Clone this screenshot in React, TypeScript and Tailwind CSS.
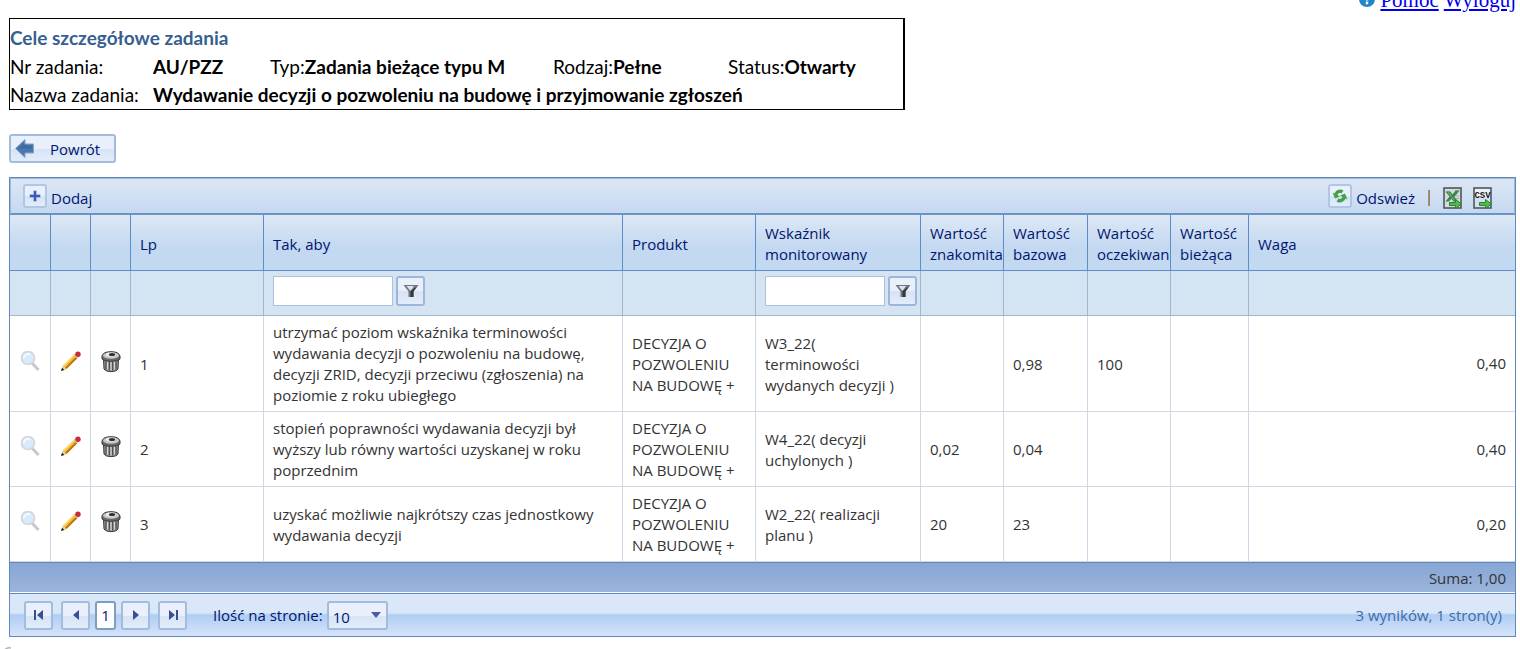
import { useState } from "react";
import type { ReactNode } from "react";

type Goal = {
  lp: number;
  goal: string;
  product: string;
  indicator: string;
  known: string;
  base: string;
  expected: string;
  current: string;
  weight: string;
};

const goals: Goal[] = [
  {
    lp: 1,
    goal: "utrzymać poziom wskaźnika terminowości\nwydawania decyzji o pozwoleniu na budowę,\ndecyzji ZRID, decyzji przeciwu (zgłoszenia) na\npoziomie z roku ubiegłego",
    product: "DECYZJA O\nPOZWOLENIU\nNA BUDOWĘ +",
    indicator: "W3_22(\nterminowości\nwydanych decyzji )",
    known: "",
    base: "0,98",
    expected: "100",
    current: "",
    weight: "0,40",
  },
  {
    lp: 2,
    goal: "stopień poprawności wydawania decyzji był\nwyższy lub równy wartości uzyskanej w roku\npoprzednim",
    product: "DECYZJA O\nPOZWOLENIU\nNA BUDOWĘ +",
    indicator: "W4_22( decyzji\nuchylonych )",
    known: "0,02",
    base: "0,04",
    expected: "",
    current: "",
    weight: "0,40",
  },
  {
    lp: 3,
    goal: "uzyskać możliwie najkrótszy czas jednostkowy\nwydawania decyzji",
    product: "DECYZJA O\nPOZWOLENIU\nNA BUDOWĘ +",
    indicator: "W2_22( realizacji\nplanu )",
    known: "20",
    base: "23",
    expected: "",
    current: "",
    weight: "0,20",
  },
];

const headers = [
  "",
  "",
  "",
  "Lp",
  "Tak, aby",
  "Produkt",
  "Wskaźnik\nmonitorowany",
  "Wartość\nznakomita",
  "Wartość\nbazowa",
  "Wartość\noczekiwana",
  "Wartość\nbieżąca",
  "Waga",
];

const glossy = "bg-linear-to-b from-[#e9f0fb] from-50% via-[#d5e3f5] via-50% to-[#e3edfa]";

const ArrowLeftIcon = () => (
  <svg width="20" height="20" viewBox="0 0 20 20" aria-hidden="true">
    <path d="M0.500 9.500 10 0.500V5H18.500V14H10V18.500Z" fill="#4a78ad" stroke="#86a5c9" />
    <path d="M3 9.500 9 4V6.500H17V9.500Z" fill="#3d6ba2" />
  </svg>
);

const PlusIcon = () => (
  <svg width="12" height="12" viewBox="0 0 12 12" aria-hidden="true">
    <path d="M6 0.500V11.500M0.500 6H11.500" stroke="#93addf" strokeWidth="3.500" />
    <path d="M6 1V11M1 6H11" stroke="#3a5bb5" strokeWidth="2" />
  </svg>
);

const RefreshIcon = () => (
  <svg width="16" height="16" viewBox="0 0 16 16" aria-hidden="true" fill="#46a04b">
    <path d="M0.500 4.500 2.500 5.500C4 2 8 0.500 11.500 2.500L9.500 5.500C8 4.500 6.500 5 5.500 7L8 8.500 3 10.500Z" />
    <path d="M15.500 11.500 13.500 10.500C12 14 8 15.500 4.500 13.500L6.500 10.500C8 11.500 9.500 11 10.500 9L8 7.500 13 5.500Z" />
  </svg>
);

const ExportArrow = () => (
  <path
    d="M6.500 15.500H12.500V12.500L18.500 17 12.500 21.500V18.500H6.500Z"
    fill="#55b84c"
    stroke="#24852b"
  />
);

const ExcelIcon = () => (
  <svg width="19" height="22" viewBox="0 0 19 22" aria-hidden="true">
    <rect x="1" y="1" width="17" height="20" fill="#d3dcd8" stroke="#50585e" strokeWidth="1.600" />
    <path d="M12 3.500H16.500M13 9H16.500M12 11.500H16.500" stroke="#a4b5a8" />
    <path d="M2.500 4.500H7.500L9.500 7.500 12.500 3.500H16.500L11.500 10 15 14.500H10.500L8.500 11.800 6 14.500H2.500L6.500 9.500Z" fill="#468a54" />
    <path d="M3.500 5H6.500L13 14H11ZM3.500 14 14.500 4.500" fill="#6fa97a" stroke="#2f6f3d" strokeWidth="0.600" />
    <ExportArrow />
  </svg>
);

const CsvIcon = () => (
  <svg width="19" height="22" viewBox="0 0 19 22" aria-hidden="true">
    <rect x="1" y="1" width="17" height="20" fill="#d3e0f2" stroke="#50585e" strokeWidth="1.600" />
    <rect x="2" y="2" width="15" height="9" fill="#eef1f4" />
    <text
      x="9.500"
      y="11"
      textAnchor="middle"
      fontFamily="'Liberation Mono', monospace"
      fontWeight="700"
      fontSize="9"
      fill="#16181a"
    >
      CSV
    </text>
    <ExportArrow />
  </svg>
);

const SearchIcon = () => (
  <svg width="20" height="22" viewBox="0 0 20 22" aria-hidden="true">
    <path d="M12 12 18.500 19" stroke="#c8c8c8" strokeWidth="3" />
    <circle cx="8" cy="7" r="6.500" fill="#d8eafc" stroke="#d3d6da" strokeWidth="1.600" />
    <path d="M4 7A4 4 0 0 1 10 3.500" fill="none" stroke="#f5faff" strokeWidth="2" />
  </svg>
);

const PencilIcon = () => (
  <svg width="20" height="22" viewBox="0 0 20 22" aria-hidden="true">
    <path d="M0.500 19.500 2 14.500 13 3.500 16.500 7 5.500 18Z" fill="#f0b429" />
    <path d="M5.500 18 16.500 7 15.200 5.700 4 17Z" fill="#b8720f" />
    <path d="M2 14.500 13 3.500 14 4.500 3 15.700Z" fill="#fbdc7c" />
    <path d="M0.500 19.500 2 14.500 5.500 18Z" fill="#e8cfa2" />
    <path d="M0 20 1 16.800 3.400 19Z" fill="#1c1c1c" />
    <path d="M12.500 4 14.500 2 18 5.500 16 7.500Z" fill="#c9cdd4" />
    <circle cx="17" cy="3.200" r="2.700" fill="#cf2b33" />
  </svg>
);

const TrashIcon = () => (
  <svg width="20" height="22" viewBox="0 0 20 22" aria-hidden="true">
    <path d="M2.500 8 3 18C5 21.500 15 21.500 17 18L17.500 8Z" fill="#8f928f" stroke="#3a3c3a" />
    <path d="M5 10V18.500M8.500 10.500V19.500M11.500 10.500V19.500M15 10V18.500" stroke="#4d504d" strokeWidth="1.200" />
    <path d="M6.500 10.500V18.500M10 10.500V19.500M13.500 10.500V18.500" stroke="#d4d7d4" strokeWidth="1.200" />
    <path d="M1 5C2 2 5 0.700 10 0.700S18 2 19 5V8C16 11 4 11 1 8Z" fill="#686b68" stroke="#3a3c3a" />
    <ellipse cx="10" cy="4.500" rx="8" ry="3.200" fill="#c6c9c6" />
    <ellipse cx="10" cy="3.500" rx="5" ry="2" fill="#eff0ef" />
    <ellipse cx="11" cy="3.500" rx="3.200" ry="1.500" fill="#2f312f" />
  </svg>
);

const FunnelIcon = () => (
  <svg width="16" height="14" viewBox="0 0 16 14" aria-hidden="true">
    <path d="M0.500 1H15.500L10.500 7.500V13H5.500V7.500Z" fill="#70777f" />
    <path d="M3.500 2H11L8 6.500 7 6.500Z" fill="#dfe3e8" />
    <path d="M7.500 7V13H10.500V7.500L14 2.500Z" fill="#34383e" />
  </svg>
);

const HelpIcon = () => (
  <svg width="16" height="16" viewBox="0 0 16 16" className="shrink-0" aria-hidden="true">
    <circle cx="8" cy="8" r="8" fill="#1f86c8" />
    <path d="M8 2V9.500" stroke="#fff" strokeWidth="2.500" />
    <circle cx="8" cy="12" r="1.400" fill="#fff" />
  </svg>
);

const PagerButton = ({ label, children }: { label: string; children: ReactNode }) => (
  <button
    aria-label={label}
    className={`flex h-[29px] w-[29px] items-center justify-center rounded-[3px] border-2 border-[#a3bbdc] ${glossy}`}
  >
    <svg width="12" height="12" viewBox="0 0 12 12" fill="#39508f" aria-hidden="true">
      {children}
    </svg>
  </button>
);

const ToolButton = ({ text, children }: { text: string; children: ReactNode }) => (
  <button className="flex items-center gap-1 text-[#00156e]">
    <span className={`flex h-6 w-6 items-center justify-center rounded-[3px] border-2 border-[#b0c6e4] ${glossy}`}>
      {children}
    </span>
    <span className="pt-1">{text}</span>
  </button>
);

const Filter = ({ label }: { label: string }) => (
  <div className="flex gap-[3px]">
    <input
      type="text"
      aria-label={label}
      className="h-[30px] w-[120px] border border-[#abc1de] bg-white px-1"
    />
    <button
      aria-label={`Filtruj: ${label}`}
      className={`flex h-[30px] w-[29px] shrink-0 items-center justify-center rounded-[3px] border-2 border-[#9db7db] ${glossy}`}
    >
      <FunnelIcon />
    </button>
  </div>
);

const TaskInfo = () => (
  <section className="max-w-[896px] border border-r-2 border-black pt-[5px] font-['Lato','Open_Sans',sans-serif] text-[19px] whitespace-nowrap text-black">
    <h1 className="text-[19px] leading-[28px] font-bold text-[#365f91]">Cele szczegółowe zadania</h1>
    <div className="grid grid-cols-[143px_117px_283px_175px_1fr]">
      <span className="leading-[29px]">Nr zadania:</span>
      <b className="leading-[29px]">AU/PZZ</b>
      <span className="leading-[29px]">
        Typ:<b>Zadania bieżące typu M</b>
      </span>
      <span className="leading-[29px]">
        Rodzaj:<b>Pełne</b>
      </span>
      <span className="leading-[29px]">
        Status:<b>Otwarty</b>
      </span>
      <span className="leading-[28px]">Nazwa zadania:</span>
      <b className="col-span-4 leading-[28px]">
        Wydawanie decyzji o pozwoleniu na budowę i przyjmowanie zgłoszeń
      </b>
    </div>
  </section>
);

const GoalRow = ({ row }: { row: Goal }) => {
  const cell = "border-r border-b border-[#d0d7e5] px-[9px] pt-[6px] pb-[5px] whitespace-pre";
  const iconCell = "border-r border-b border-[#d0d7e5] p-0 pb-1";

  return (
    <tr className="bg-white text-[#333333]">
      <td className={iconCell}>
        <button aria-label={`Podgląd ${row.lp}`} className="mx-auto block"><SearchIcon /></button>
      </td>
      <td className={iconCell}>
        <button aria-label={`Edytuj ${row.lp}`} className="mx-auto block"><PencilIcon /></button>
      </td>
      <td className={iconCell}>
        <button aria-label={`Usuń ${row.lp}`} className="mx-auto block"><TrashIcon /></button>
      </td>
      <td className={cell}>{row.lp}</td>
      <td className={cell}>{row.goal}</td>
      <td className={cell}>{row.product}</td>
      <td className={cell}>{row.indicator}</td>
      <td className={cell}>{row.known}</td>
      <td className={cell}>{row.base}</td>
      <td className={cell}>{row.expected}</td>
      <td className={cell}>{row.current}</td>
      <td className="border-b border-[#d0d7e5] px-[9px] text-right">{row.weight}</td>
    </tr>
  );
};

export default function App() {
  const [pageSize, setPageSize] = useState("10");

  return (
    <div className="bg-white pr-1 pl-[9px] font-['Open_Sans','Noto_Sans',sans-serif] text-[15px] leading-[21px]">
      <nav className="flex h-3 items-end justify-end gap-[5px] overflow-hidden font-['Liberation_Serif',serif] text-[21px] leading-6 text-[#0000ee]">
        <span className="flex h-6 items-start pt-[3px]"><HelpIcon /></span>
        <a href="#pomoc" className="underline">Pomoc</a>
        <a href="#wyloguj" className="underline">Wyloguj</a>
      </nav>

      <main className="pt-[6px]">
        <TaskInfo />

        <button
          className={`mt-6 flex h-[29px] w-[107px] items-center gap-[15px] rounded-[3px] border-2 border-[#a3bbdc] pl-1 text-[#00156e] ${glossy}`}
        >
          <ArrowLeftIcon />
          <span className="pt-px">Powrót</span>
        </button>

        <div className="mt-[14px] border border-[#6289b5]">
          <div className="flex h-[37px] items-center justify-between border border-b-2 border-[#9cb8db] border-b-[#6c92c0] bg-linear-to-b from-[#dce7f5] to-[#c5d8f1] pr-[22px] pl-3">
            <ToolButton text="Dodaj"><PlusIcon /></ToolButton>
            <div className="flex items-center">
              <ToolButton text="Odswież"><RefreshIcon /></ToolButton>
              <div className="flex items-center pt-[3px]">
                <span className="mr-[13px] ml-[13px] h-4 w-[2px] border-l border-[#c08a3c] bg-[#7f8aa0]" />
                <button aria-label="Eksport do Excela"><ExcelIcon /></button>
                <button aria-label="Eksport do CSV" className="ml-[11px]"><CsvIcon /></button>
              </div>
            </div>
          </div>

          <table className="w-full table-fixed border-separate border-spacing-0 text-left">
            <colgroup>
              <col className="w-[41px]" />
              <col className="w-[40px]" />
              <col className="w-[40px]" />
              <col className="w-[133px]" />
              <col className="w-[359px]" />
              <col className="w-[133px]" />
              <col className="w-[165px]" />
              <col className="w-[83px]" />
              <col className="w-[84px]" />
              <col className="w-[83px]" />
              <col className="w-[78px]" />
              <col />
            </colgroup>
            <thead>
              <tr className="h-14 bg-linear-to-b from-[#dde8f5] via-[#c3d8f1] via-60% to-[#c3d8f1] text-[#00156e]">
                {headers.map((header, i) => (
                  <th
                    key={i}
                    className="overflow-hidden border-r border-b border-[#5d8cc9] pt-[3px] pl-[9px] font-normal whitespace-pre last:border-r-0"
                  >
                    {header}
                  </th>
                ))}
              </tr>
              <tr className="h-[45px] bg-[#d5e4f3]">
                {headers.map((header, i) => (
                  <td key={i} className="border-r border-b border-[#9eb6ce] pl-[9px] pb-1 last:border-r-0">
                    {i === 4 || i === 6 ? <Filter label={header} /> : null}
                  </td>
                ))}
              </tr>
            </thead>
            <tbody>
              {goals.map((row) => (
                <GoalRow key={row.lp} row={row} />
              ))}
            </tbody>
            <tfoot>
              <tr className="h-[30px] bg-linear-to-b from-[#87a6d4] to-[#9ab4dc] text-[#333333]">
                <td colSpan={12} className="border-t border-[#6289b5] px-[9px] pt-[2px] text-right">
                  Suma: 1,00
                </td>
              </tr>
            </tfoot>
          </table>

          <div className="mt-px flex h-[43px] items-center border-t border-[#5a8ac0] bg-linear-to-b from-[#d9e7f8] from-45% via-[#b0cdf3] via-50% to-[#d5e4f9] pr-[13px] pl-[14px] text-[#00156e]">
            <div className="flex">
              <PagerButton label="Pierwsza strona">
                <path d="M1 1H3V11H1ZM10 1V11L4 6Z" />
              </PagerButton>
              <span className="w-2" />
              <PagerButton label="Poprzednia strona">
                <path d="M9 1V11L3 6Z" />
              </PagerButton>
              <button className="mx-[5px] h-[29px] w-[21px] rounded-[3px] border-2 border-[#7f9dc0] bg-white">
                1
              </button>
              <PagerButton label="Następna strona">
                <path d="M3 1V11L9 6Z" />
              </PagerButton>
              <span className="w-2" />
              <PagerButton label="Ostatnia strona">
                <path d="M9 1H11V11H9ZM2 1V11L8 6Z" />
              </PagerButton>
            </div>
            <label htmlFor="page-size" className="ml-[26px] pt-px">Ilość na stronie:</label>
            <div className="relative ml-1">
              <select
                id="page-size"
                value={pageSize}
                onChange={(e) => setPageSize(e.target.value)}
                className={`h-[29px] w-[61px] appearance-none rounded-[3px] border-2 border-[#a3bbdc] pt-1 pl-1 ${glossy}`}
              >
                <option>10</option>
                <option>20</option>
                <option>50</option>
              </select>
              <svg width="10" height="6" viewBox="0 0 10 6" className="pointer-events-none absolute top-[11px] right-[7px]" aria-hidden="true">
                <path d="M0 0H10L5 6Z" fill="#4b5f9c" />
              </svg>
            </div>
            <span className="ml-auto pt-px text-[#3d6cab]">3 wyników, 1 stron(y)</span>
          </div>
        </div>
      </main>

      <svg width="14" height="12" viewBox="0 0 14 12" className="mt-[9px] -ml-[7px]" aria-hidden="true">
        <path d="M3 3.500C5 1.500 7 1.500 9 2" fill="none" stroke="#b5b5b5" strokeWidth="1.500" />
      </svg>
    </div>
  );
}
